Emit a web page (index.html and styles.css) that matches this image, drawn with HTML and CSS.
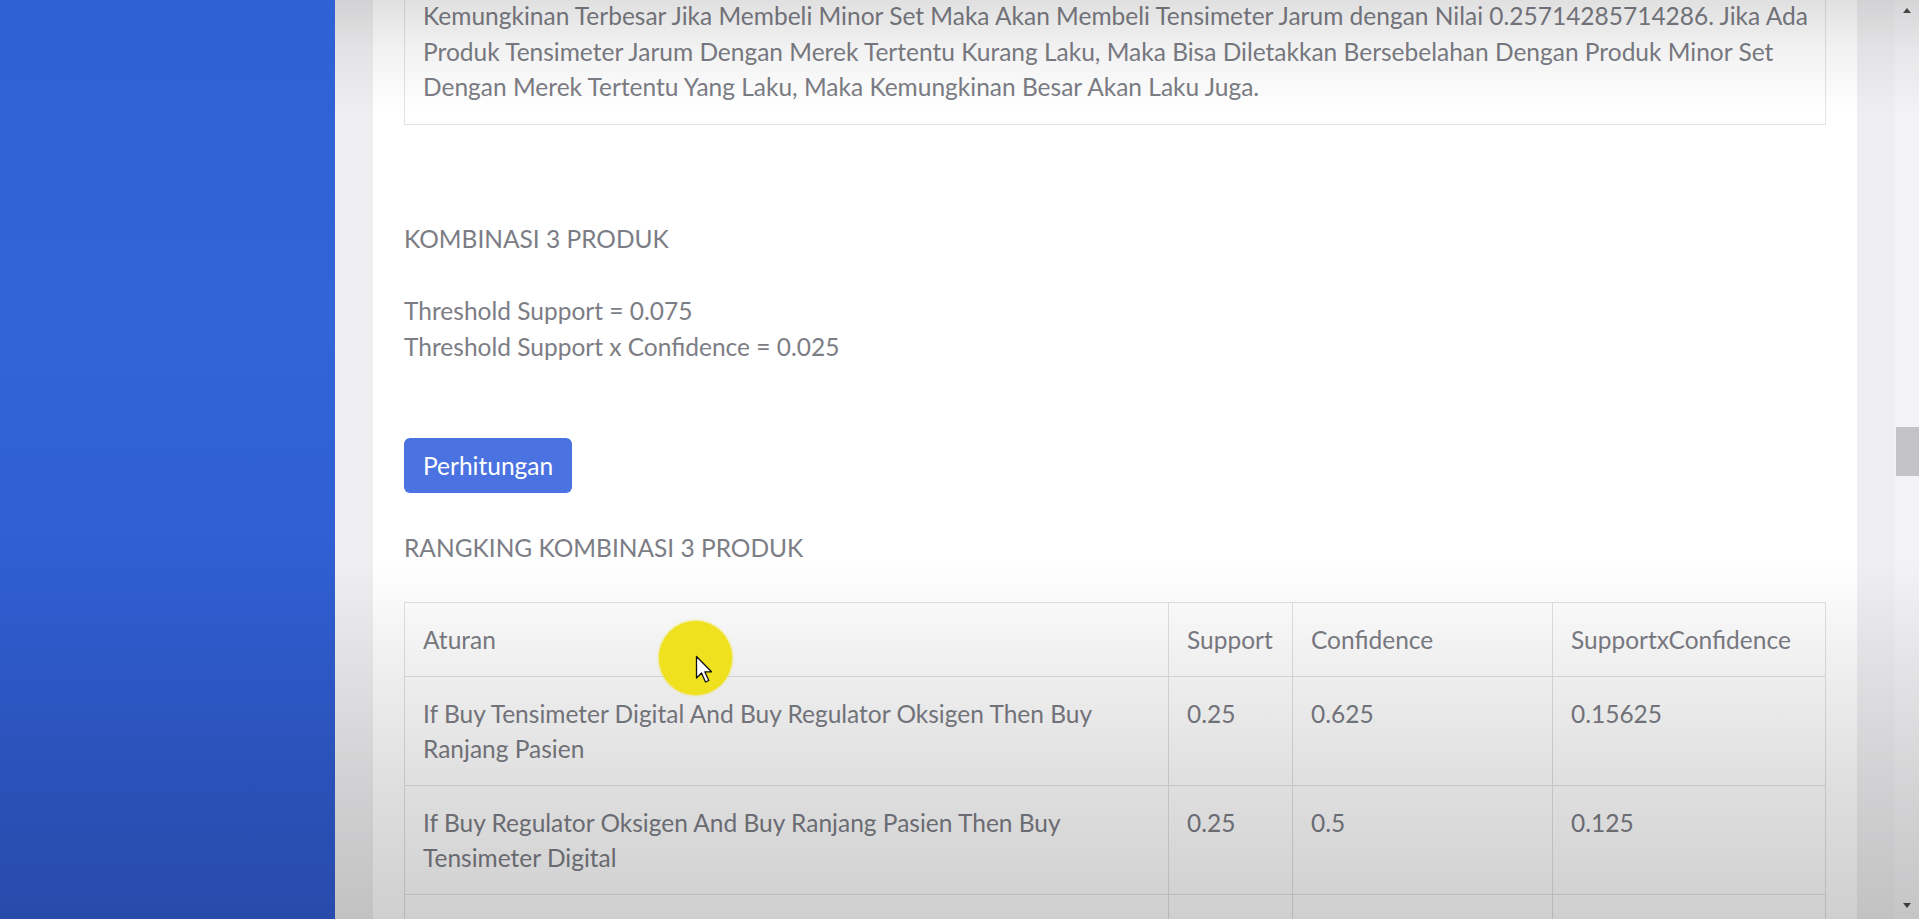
FILE: index.html
```html
<!DOCTYPE html>
<html lang="id">
<head>
<meta charset="utf-8">
<title>Kombinasi 3 Produk</title>
<link rel="stylesheet" href="styles.css">
</head>
<body>
<aside class="sidebar"></aside>
<div class="main">
  <div class="content">
    <div class="card">
      <div class="result-box">
        <p>Kemungkinan Terbesar Jika Membeli Minor Set Maka Akan Membeli Tensimeter Jarum dengan Nilai 0.25714285714286. Jika Ada Produk Tensimeter Jarum Dengan Merek Tertentu Kurang Laku, Maka Bisa Diletakkan Bersebelahan Dengan Produk Minor Set Dengan Merek Tertentu Yang Laku, Maka Kemungkinan Besar Akan Laku Juga.</p>
      </div>
      <h2 class="section-title first">KOMBINASI 3 PRODUK</h2>
      <div class="thresholds">
        <div>Threshold Support = 0.075</div>
        <div>Threshold Support x Confidence = 0.025</div>
      </div>
      <button class="btn-primary" type="button">Perhitungan</button>
      <h2 class="section-title">RANGKING KOMBINASI 3 PRODUK</h2>
      <table class="rank-table">
        <colgroup>
          <col class="c-rule"><col class="c-sup"><col class="c-conf"><col class="c-sxc">
        </colgroup>
        <thead>
          <tr><th>Aturan</th><th>Support</th><th>Confidence</th><th>SupportxConfidence</th></tr>
        </thead>
        <tbody>
          <tr><td>If Buy Tensimeter Digital And Buy Regulator Oksigen Then Buy Ranjang Pasien</td><td>0.25</td><td>0.625</td><td>0.15625</td></tr>
          <tr><td>If Buy Regulator Oksigen And Buy Ranjang Pasien Then Buy Tensimeter Digital</td><td>0.25</td><td>0.5</td><td>0.125</td></tr>
          <tr class="below-fold"><td>&nbsp;</td><td>&nbsp;</td><td>&nbsp;</td><td>&nbsp;</td></tr>
        </tbody>
      </table>
    </div>
  </div>
  <div class="scrollbar">
    <div class="sb-btn"><span class="tri-up"></span></div>
    <div class="sb-track"><div class="sb-thumb"></div></div>
    <div class="sb-btn bottom"><span class="tri-down"></span></div>
  </div>
  <div class="vignette"></div>
</div>
<div class="cursor-spot">
  <svg class="cursor-arrow" width="18" height="29" viewBox="0 0 18 29"><path d="M1.5 1.5 L1.5 23 L6.5 18 L10.5 27 L13.8 25.5 L9.8 16.8 L16.5 16.8 Z" fill="#fff" stroke="#111" stroke-width="1.3" stroke-linejoin="round"/></svg>
</div>
</body>
</html>
```
FILE: styles.css
```css
html, body {
  margin: 0;
  height: 919px;
  overflow: hidden;
}
body {
  position: relative;
  display: flex;
  font-family: Lato, "Open Sans", sans-serif;
  font-size: 24.5px;
  line-height: 35.5px;
  color: #7c7d85;
}
.sidebar {
  width: 335px;
  flex: none;
  background: linear-gradient(180deg, #2f61d4 0%, #3264d8 35%, #2f5fd2 60%, #2a51b8 85%, #284bab 100%);
}
.main {
  position: relative;
  flex: 1;
  display: flex;
  background: #efeff1;
  overflow: hidden;
}
.content {
  flex: 1;
  padding: 0 38px;
  overflow: hidden;
}
.card {
  background: #fff;
  padding: 0 31px;
  min-height: 1100px;
  margin-top: -22px;
}
.result-box {
  border: 1px solid #e3e4ea;
  padding: 19px 10px 19px 18px;
}
.result-box p {
  margin: 0;
}
.section-title {
  margin: 36.5px 0 0;
  font-size: 24.5px;
  font-weight: 400;
  line-height: 35.5px;
}
.section-title.first {
  margin-top: 96.5px;
}
.thresholds {
  margin-top: 36.5px;
}
.btn-primary {
  display: block;
  margin-top: 74px;
  height: 55px;
  padding: 0 19px;
  border: 0;
  border-radius: 6px;
  background: #4a72e0;
  color: #fff;
  font-family: inherit;
  font-size: 24.5px;
}
.rank-table {
  margin-top: 37px;
  width: 100%;
  border-collapse: collapse;
  table-layout: fixed;
}
.c-rule { width: 764px; }
.c-sup { width: 124px; }
.c-conf { width: 260px; }
.rank-table th,
.rank-table td {
  border: 1px solid #e0e1e6;
  padding: 19px 18px 18px;
  text-align: left;
  vertical-align: top;
  font-weight: 400;
}
.scrollbar {
  width: 24px;
  flex: none;
  display: flex;
  flex-direction: column;
  background: #f3f3f5;
}
.sb-btn {
  height: 20px;
  display: flex;
  align-items: center;
  justify-content: center;
}
.sb-btn.bottom {
  height: 22px;
  align-items: flex-start;
}
.tri-up {
  width: 0;
  height: 0;
  border-left: 4px solid transparent;
  border-right: 4px solid transparent;
  border-bottom: 5px solid #4c4c4c;
}
.tri-down {
  width: 0;
  height: 0;
  margin-top: 6px;
  border-left: 4px solid transparent;
  border-right: 4px solid transparent;
  border-top: 5px solid #4c4c4c;
}
.sb-track {
  flex: 1;
}
.sb-thumb {
  margin: 407px 0 0 1px;
  height: 49px;
  background: #c3c3c5;
}
.vignette {
  position: absolute;
  inset: 0;
  pointer-events: none;
  background: linear-gradient(180deg,
    rgba(0,0,0,0.12) 0px,
    rgba(0,0,0,0.05) 50px,
    rgba(0,0,0,0) 115px,
    rgba(0,0,0,0) 560px,
    rgba(0,0,0,0.06) 660px,
    rgba(0,0,0,0.13) 790px,
    rgba(0,0,0,0.19) 919px);
}
.cursor-spot {
  position: absolute;
  left: 659px;
  top: 621px;
  width: 73px;
  height: 74px;
  border-radius: 50%;
  background: #efe11d;
  box-shadow: 0 0 2px 1px rgba(239,225,29,0.6);
}
.cursor-arrow {
  position: absolute;
  left: 36px;
  top: 34px;
}
```
